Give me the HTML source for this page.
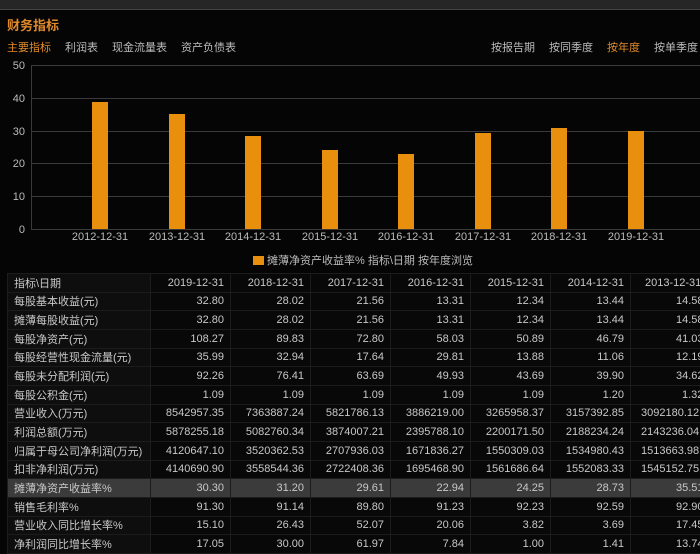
<!DOCTYPE html>
<html><head><meta charset="utf-8"><style>
*{margin:0;padding:0;box-sizing:border-box}
body{width:700px;height:553px;overflow:hidden;background:#050505;font-family:"Liberation Sans","Noto Sans CJK SC",sans-serif;color:#c8c8c8;position:relative}
.top{position:absolute;left:0;top:0;width:700px;height:10px;background:#262626;border-bottom:1px solid #444}
.title{position:absolute;left:7px;top:15px;font-size:13px;font-weight:bold;color:#e08a2a}
.tabs{position:absolute;top:39px;font-size:11px;color:#bbb}
.tabs span{margin-right:14px}
.on{color:#e08a2a}
svg{position:absolute;left:0;top:55px}
.legend{position:absolute;left:253px;top:252px;font-size:11px;color:#bbb}
.legend i{display:inline-block;width:11px;height:9px;background:#e8900e;vertical-align:-1px;margin-right:3px}
table{position:absolute;left:7px;top:273px;border-collapse:collapse;font-size:11px;table-layout:fixed;width:720px}
td{height:18.67px;border:1px solid #1c1c1c;padding:0 6px;text-align:right;white-space:nowrap;overflow:hidden;background:#080808}
td:first-child{text-align:left;padding-left:6px;background:#0e0e0e}
tr.h td{background:#3b3b3b}
td.l{text-align:left;padding-left:45px}
td.m{text-align:left;padding-left:51px}
td.w{text-align:left;padding-left:10px}
</style></head><body>
<div class="top"></div>
<div class="title">财务指标</div>
<div class="tabs" style="left:7px"><span class="on">主要指标</span><span>利润表</span><span>现金流量表</span><span>资产负债表</span></div>
<div class="tabs" style="left:491px"><span>按报告期</span><span>按同季度</span><span class="on">按年度</span><span style="margin:0">按单季度</span></div>
<svg width="700" height="190" viewBox="0 55 700 190">
<g font-family="Liberation Sans" font-size="11" fill="#bbb" text-anchor="end">
<text x="25" y="69">50</text><text x="25" y="102">40</text><text x="25" y="135">30</text><text x="25" y="167">20</text><text x="25" y="200">10</text><text x="25" y="233">0</text></g>
<g stroke="#3a3a3a" stroke-width="1">
<line x1="31" y1="65.5" x2="700" y2="65.5"/><line x1="31" y1="98.5" x2="700" y2="98.5"/><line x1="31" y1="131.5" x2="700" y2="131.5"/><line x1="31" y1="163.5" x2="700" y2="163.5"/><line x1="31" y1="196.5" x2="700" y2="196.5"/><line x1="31" y1="229.5" x2="700" y2="229.5"/><line x1="31.5" y1="65" x2="31.5" y2="229"/></g>
<g fill="#e8900e">
<rect x="92" y="102" width="16" height="127"/><rect x="169" y="114" width="16" height="115"/><rect x="245" y="136" width="16" height="93"/><rect x="322" y="150" width="16" height="79"/><rect x="398" y="154" width="16" height="75"/><rect x="475" y="133" width="16" height="96"/><rect x="551" y="128" width="16" height="101"/><rect x="628" y="131" width="16" height="98"/></g>
<g font-family="Liberation Sans" font-size="11" fill="#bbb" text-anchor="middle">
<text x="100" y="240">2012-12-31</text><text x="177" y="240">2013-12-31</text><text x="253" y="240">2014-12-31</text><text x="330" y="240">2015-12-31</text><text x="406" y="240">2016-12-31</text><text x="483" y="240">2017-12-31</text><text x="559" y="240">2018-12-31</text><text x="636" y="240">2019-12-31</text></g>
</svg>
<div class="legend"><i></i>摊薄净资产收益率% 指标\日期 按年度浏览</div>
<table>
<colgroup><col style="width:143px"><col style="width:80px"><col style="width:80px"><col style="width:80px"><col style="width:80px"><col style="width:80px"><col style="width:80px"><col style="width:97px"></colgroup>
<tr><td>指标\日期</td><td>2019-12-31</td><td>2018-12-31</td><td>2017-12-31</td><td>2016-12-31</td><td>2015-12-31</td><td>2014-12-31</td><td class="w" style="padding-left:14px">2013-12-31</td></tr>
<tr><td>每股基本收益(元)</td><td>32.80</td><td>28.02</td><td>21.56</td><td>13.31</td><td>12.34</td><td>13.44</td><td class="l">14.58</td></tr>
<tr><td>摊薄每股收益(元)</td><td>32.80</td><td>28.02</td><td>21.56</td><td>13.31</td><td>12.34</td><td>13.44</td><td class="l">14.58</td></tr>
<tr><td>每股净资产(元)</td><td>108.27</td><td>89.83</td><td>72.80</td><td>58.03</td><td>50.89</td><td>46.79</td><td class="l">41.03</td></tr>
<tr><td>每股经营性现金流量(元)</td><td>35.99</td><td>32.94</td><td>17.64</td><td>29.81</td><td>13.88</td><td>11.06</td><td class="l">12.19</td></tr>
<tr><td>每股未分配利润(元)</td><td>92.26</td><td>76.41</td><td>63.69</td><td>49.93</td><td>43.69</td><td>39.90</td><td class="l">34.62</td></tr>
<tr><td>每股公积金(元)</td><td>1.09</td><td>1.09</td><td>1.09</td><td>1.09</td><td>1.09</td><td>1.20</td><td class="m">1.32</td></tr>
<tr><td>营业收入(万元)</td><td>8542957.35</td><td>7363887.24</td><td>5821786.13</td><td>3886219.00</td><td>3265958.37</td><td>3157392.85</td><td class="w">3092180.12</td></tr>
<tr><td>利润总额(万元)</td><td>5878255.18</td><td>5082760.34</td><td>3874007.21</td><td>2395788.10</td><td>2200171.50</td><td>2188234.24</td><td class="w">2143236.04</td></tr>
<tr><td>归属于母公司净利润(万元)</td><td>4120647.10</td><td>3520362.53</td><td>2707936.03</td><td>1671836.27</td><td>1550309.03</td><td>1534980.43</td><td class="w">1513663.98</td></tr>
<tr><td>扣非净利润(万元)</td><td>4140690.90</td><td>3558544.36</td><td>2722408.36</td><td>1695468.90</td><td>1561686.64</td><td>1552083.33</td><td class="w">1545152.75</td></tr>
<tr class="h"><td>摊薄净资产收益率%</td><td>30.30</td><td>31.20</td><td>29.61</td><td>22.94</td><td>24.25</td><td>28.73</td><td class="l">35.51</td></tr>
<tr><td>销售毛利率%</td><td>91.30</td><td>91.14</td><td>89.80</td><td>91.23</td><td>92.23</td><td>92.59</td><td class="l">92.90</td></tr>
<tr><td>营业收入同比增长率%</td><td>15.10</td><td>26.43</td><td>52.07</td><td>20.06</td><td>3.82</td><td>3.69</td><td class="l">17.45</td></tr>
<tr><td>净利润同比增长率%</td><td>17.05</td><td>30.00</td><td>61.97</td><td>7.84</td><td>1.00</td><td>1.41</td><td class="l">13.74</td></tr>
</table>
</body></html>
